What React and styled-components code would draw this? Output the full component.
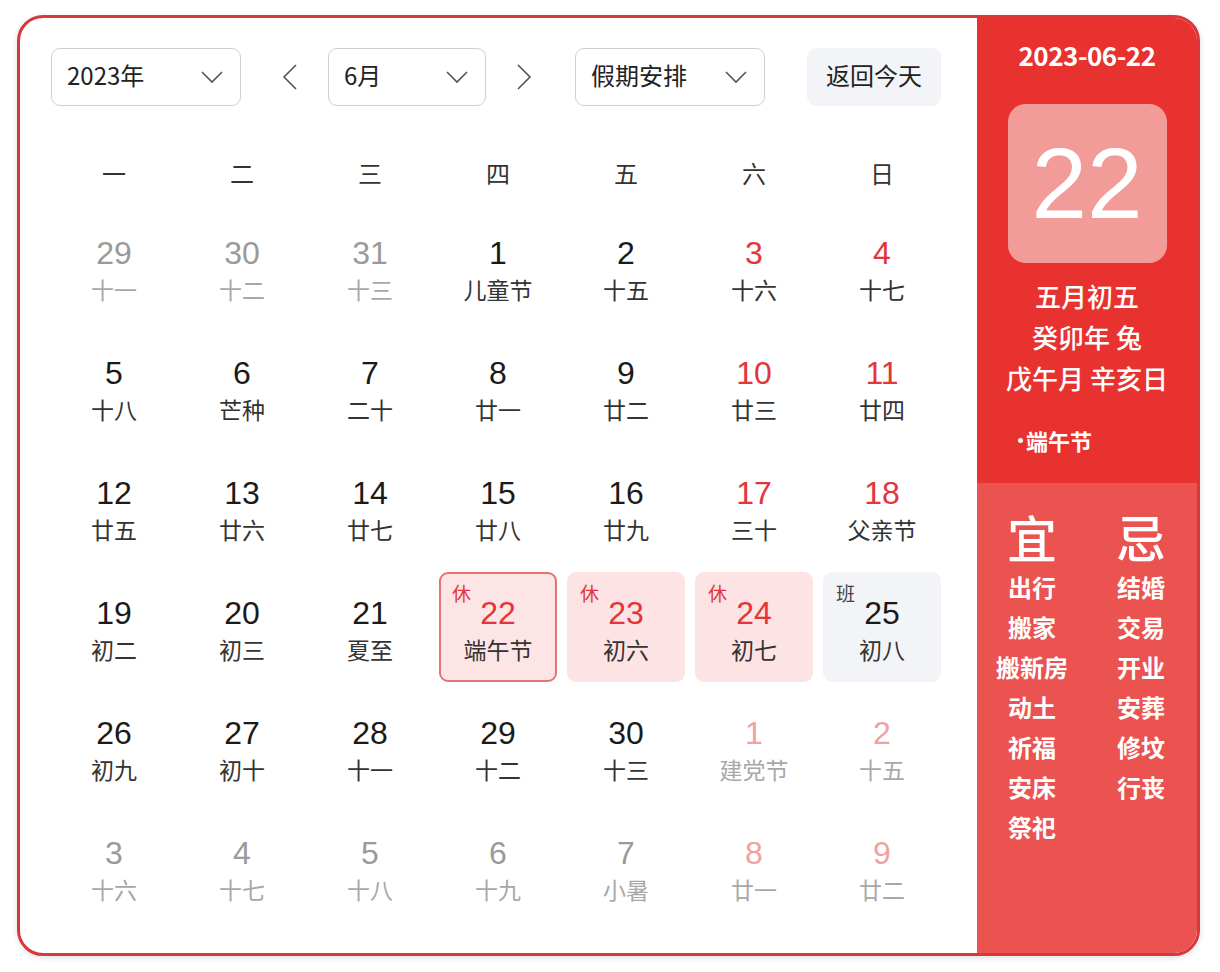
import React from "react";
import styled, { createGlobalStyle } from "styled-components";

const GlobalStyle = createGlobalStyle`
  html, body {
    margin: 0;
    padding: 0;
    background: #ffffff;
  }
  body {
    font-family: "Noto Sans CJK SC", "Noto Sans", sans-serif;
    color: #222;
  }
`;

const RED = "#e3353a";

const weekdays = ["一", "二", "三", "四", "五", "六", "日"];

// kind: prev | cur | next ; tag: 休 / 班 ; mark: selected | holiday | work
const weeks = [
  [
    { d: 29, l: "十一", kind: "prev" },
    { d: 30, l: "十二", kind: "prev" },
    { d: 31, l: "十三", kind: "prev" },
    { d: 1, l: "儿童节" },
    { d: 2, l: "十五" },
    { d: 3, l: "十六", red: true },
    { d: 4, l: "十七", red: true },
  ],
  [
    { d: 5, l: "十八" },
    { d: 6, l: "芒种" },
    { d: 7, l: "二十" },
    { d: 8, l: "廿一" },
    { d: 9, l: "廿二" },
    { d: 10, l: "廿三", red: true },
    { d: 11, l: "廿四", red: true },
  ],
  [
    { d: 12, l: "廿五" },
    { d: 13, l: "廿六" },
    { d: 14, l: "廿七" },
    { d: 15, l: "廿八" },
    { d: 16, l: "廿九" },
    { d: 17, l: "三十", red: true },
    { d: 18, l: "父亲节", red: true },
  ],
  [
    { d: 19, l: "初二" },
    { d: 20, l: "初三" },
    { d: 21, l: "夏至" },
    { d: 22, l: "端午节", red: true, tag: "休", mark: "selected" },
    { d: 23, l: "初六", red: true, tag: "休", mark: "holiday" },
    { d: 24, l: "初七", red: true, tag: "休", mark: "holiday" },
    { d: 25, l: "初八", tag: "班", mark: "work" },
  ],
  [
    { d: 26, l: "初九" },
    { d: 27, l: "初十" },
    { d: 28, l: "十一" },
    { d: 29, l: "十二" },
    { d: 30, l: "十三" },
    { d: 1, l: "建党节", kind: "next", red: true },
    { d: 2, l: "十五", kind: "next", red: true },
  ],
  [
    { d: 3, l: "十六", kind: "next" },
    { d: 4, l: "十七", kind: "next" },
    { d: 5, l: "十八", kind: "next" },
    { d: 6, l: "十九", kind: "next" },
    { d: 7, l: "小暑", kind: "next" },
    { d: 8, l: "廿一", kind: "next", red: true },
    { d: 9, l: "廿二", kind: "next", red: true },
  ],
];

const yi = ["出行", "搬家", "搬新房", "动土", "祈福", "安床", "祭祀"];
const ji = ["结婚", "交易", "开业", "安葬", "修坟", "行丧"];

const Page = styled.div`
  padding: 15px 20px 16px 17px;
`;

const Card = styled.div`
  width: 1183px;
  height: 941px;
  box-sizing: border-box;
  display: flex;
  border: 3px solid #d8373b;
  border-radius: 26px;
  overflow: hidden;
  background: #fff;
  box-shadow: 0 2px 6px rgba(0, 0, 0, 0.12);
`;

const Main = styled.div`
  flex: 1;
  padding: 30px 36px 0 31px;
  display: flex;
  flex-direction: column;
`;

const Toolbar = styled.div`
  display: flex;
  align-items: center;
  height: 58px;
`;

const Select = styled.div`
  width: ${({ $w }) => $w}px;
  height: 58px;
  box-sizing: border-box;
  border: 1px solid #cfd0d6;
  border-radius: 9px;
  display: flex;
  align-items: center;
  justify-content: space-between;
  padding: 0 16px 0 15px;
  font-size: 24px;
  color: #222;
  margin-left: ${({ $ml }) => $ml || 0}px;

  span {
    margin-top: -5px;
  }
`;

const MonthGroup = styled.div`
  display: flex;
  align-items: center;
  gap: 18px;
  margin-left: 29px;
`;

const ArrowButton = styled.div`
  width: 40px;
  height: 58px;
  display: flex;
  align-items: center;
  justify-content: center;
`;

const TodayButton = styled.div`
  margin-left: auto;
  width: 134px;
  height: 58px;
  box-sizing: border-box;
  padding-bottom: 5px;
  border-radius: 9px;
  background: #f3f4f7;
  display: flex;
  align-items: center;
  justify-content: center;
  font-size: 24px;
  color: #222;
`;

const WeekHeader = styled.div`
  margin: 41px 0 0 4px;
  display: grid;
  grid-template-columns: repeat(7, 118px);
  column-gap: 10px;
  height: 50px;
  align-items: center;
`;

const WeekDay = styled.div`
  text-align: center;
  font-size: 24px;
  color: #333;
`;

const Grid = styled.div`
  margin: 15px 0 0 4px;
  display: grid;
  grid-template-columns: repeat(7, 118px);
  grid-auto-rows: 110px;
  gap: 10px;
`;

const cellBg = {
  selected: "#fde5e5",
  holiday: "#fde3e3",
  work: "#f3f4f7",
};

const Cell = styled.div`
  position: relative;
  box-sizing: border-box;
  border-radius: 9px;
  background: ${({ $mark }) => cellBg[$mark] || "transparent"};
  border: 2px solid ${({ $mark }) => ($mark === "selected" ? "#e47474" : "transparent")};
  display: flex;
  flex-direction: column;
  align-items: center;
  padding-top: 21px;
`;

const numColor = (kind, red) => {
  if (kind === "next" && red) return "#f0a2a2";
  if (kind === "prev" || kind === "next") return "#9a9a9a";
  return red ? RED : "#1a1a1a";
};

const DayNum = styled.div`
  font-family: "Liberation Sans", Arial, sans-serif;
  font-size: 32px;
  line-height: 36px;
  color: ${({ $kind, $red }) => numColor($kind, $red)};
`;

const Lunar = styled.div`
  margin-top: 3px;
  font-size: 23px;
  line-height: 30px;
  color: ${({ $kind }) => ($kind === "prev" || $kind === "next" ? "#a8a8a8" : "#333")};
`;

const Tag = styled.span`
  position: absolute;
  top: 9px;
  left: 11px;
  font-size: 19px;
  line-height: 1;
  color: ${({ $work }) => ($work ? "#444" : RED)};
`;

const Side = styled.div`
  width: 220px;
  display: flex;
  flex-direction: column;
  color: #fff;
`;

const SideTop = styled.div`
  height: 465px;
  background: #e7322f;
  display: flex;
  flex-direction: column;
  align-items: center;
  padding-top: 21px;
  box-sizing: border-box;
`;

const DateText = styled.div`
  font-size: 26px;
  font-weight: 700;
  line-height: 32px;
  letter-spacing: -0.5px;
`;

const DayBox = styled.div`
  margin-top: 33px;
  width: 159px;
  height: 159px;
  border-radius: 18px;
  background: #f29c99;
  display: flex;
  align-items: center;
  justify-content: center;
  font-family: "Liberation Sans", Arial, sans-serif;
  font-size: 100px;
  line-height: 1;
  padding-bottom: 2px;
  box-sizing: border-box;
`;

const LunarInfo = styled.div`
  margin-top: 12px;
  text-align: center;
  font-size: 26px;
  font-weight: 500;
  line-height: 41px;
`;

const Festival = styled.div`
  align-self: flex-start;
  display: flex;
  align-items: center;
  margin: 27px 0 0 41px;
  font-size: 22px;
  font-weight: 700;
  line-height: 30px;
`;

const Dot = styled.span`
  width: 5px;
  height: 5px;
  border-radius: 50%;
  background: #fff;
  margin-right: 3px;
`;

const SideBottom = styled.div`
  flex: 1;
  background: #ea5350;
  display: grid;
  grid-template-columns: 1fr 1fr;
  padding: 24px 0 0 0;
`;

const AdviceCol = styled.div`
  display: flex;
  flex-direction: column;
  align-items: center;
  margin-left: ${({ $ml }) => $ml}px;
`;

const AdviceTitle = styled.div`
  font-size: 50px;
  line-height: 58px;
  font-weight: 500;
  margin-bottom: 2px;
`;

const AdviceItem = styled.div`
  font-size: 24px;
  font-weight: 700;
  line-height: 40px;
`;

const Chevron = () => (
  <svg width="24" height="14" viewBox="0 0 24 14">
    <polyline points="2,2 12,12 22,2" fill="none" stroke="#555" strokeWidth="1.6" />
  </svg>
);

const Arrow = ({ dir }) => (
  <svg width="16" height="28" viewBox="0 0 16 28">
    <polyline
      points={dir === "left" ? "14,2 2,14 14,26" : "2,2 14,14 2,26"}
      fill="none"
      stroke="#555"
      strokeWidth="1.6"
    />
  </svg>
);

const App = () => {
  return (
    <>
      <GlobalStyle />
      <Page>
        <Card>
          <Main>
            <Toolbar>
              <Select $w={190}>
                <span>2023年</span>
                <Chevron />
              </Select>
              <MonthGroup>
                <ArrowButton>
                  <Arrow dir="left" />
                </ArrowButton>
                <Select $w={158}>
                  <span>6月</span>
                  <Chevron />
                </Select>
                <ArrowButton>
                  <Arrow dir="right" />
                </ArrowButton>
              </MonthGroup>
              <Select $w={190} $ml={31}>
                <span>假期安排</span>
                <Chevron />
              </Select>
              <TodayButton>返回今天</TodayButton>
            </Toolbar>

            <WeekHeader>
              {weekdays.map((w) => (
                <WeekDay key={w}>{w}</WeekDay>
              ))}
            </WeekHeader>

            <Grid>
              {weeks.flat().map((c, i) => (
                <Cell key={i} $mark={c.mark}>
                  {c.tag && <Tag $work={c.tag === "班"}>{c.tag}</Tag>}
                  <DayNum $kind={c.kind} $red={c.red}>
                    {c.d}
                  </DayNum>
                  <Lunar $kind={c.kind}>{c.l}</Lunar>
                </Cell>
              ))}
            </Grid>
          </Main>

          <Side>
            <SideTop>
              <DateText>2023-06-22</DateText>
              <DayBox>22</DayBox>
              <LunarInfo>
                <div>五月初五</div>
                <div>癸卯年 兔</div>
                <div>戊午月 辛亥日</div>
              </LunarInfo>
              <Festival>
                <Dot />
                端午节
              </Festival>
            </SideTop>
            <SideBottom>
              <AdviceCol $ml={0}>
                <AdviceTitle>宜</AdviceTitle>
                {yi.map((t) => (
                  <AdviceItem key={t}>{t}</AdviceItem>
                ))}
              </AdviceCol>
              <AdviceCol $ml={-2}>
                <AdviceTitle>忌</AdviceTitle>
                {ji.map((t) => (
                  <AdviceItem key={t}>{t}</AdviceItem>
                ))}
              </AdviceCol>
            </SideBottom>
          </Side>
        </Card>
      </Page>
    </>
  );
};

export default App;
